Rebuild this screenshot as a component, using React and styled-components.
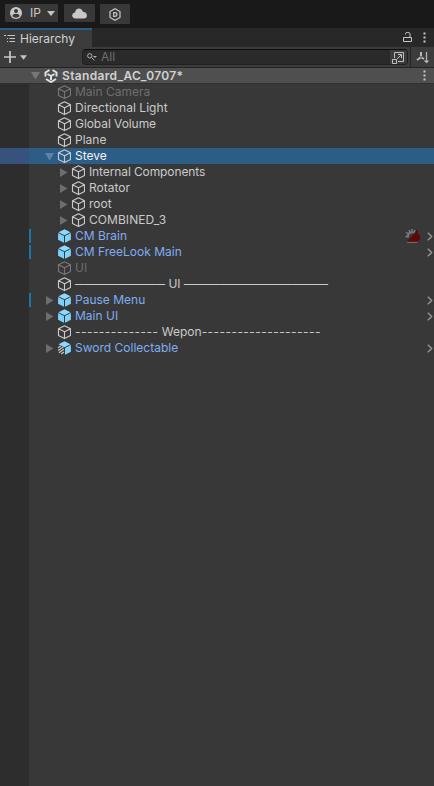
import React from 'react';
import styled, { createGlobalStyle, css } from 'styled-components';

const Global = createGlobalStyle`
  * { box-sizing: border-box; }
  body { margin: 0; background: #383838; }
`;

const Window = styled.div`
  width: 434px;
  height: 786px;
  display: flex;
  flex-direction: column;
  overflow: hidden;
  background: #383838;
  color: #c8c8c8;
  font: 12px/16px Inter, sans-serif;
  svg { display: block; flex: none; }
`;

const TopBar = styled.header`
  height: 28px;
  flex: none;
  display: flex;
  padding: 4px 5px;
  background: #191919;
`;

const TopButton = styled.div`
  width: ${(p) => p.$w}px;
  height: ${(p) => p.$h || 18}px;
  margin-right: ${(p) => p.$gap || 0}px;
  display: flex;
  align-items: center;
  justify-content: ${(p) => (p.$spread ? 'flex-start' : 'center')};
  padding-left: ${(p) => (p.$spread ? 5 : 0)}px;
  background: #383838;
  border-radius: 1px;
`;

const AccountName = styled.span`
  width: 17px;
  margin-left: 8px;
`;

const TabBar = styled.nav`
  height: 19px;
  flex: none;
  display: flex;
  justify-content: space-between;
  background: #282828;
`;

const Tab = styled.div`
  width: 92px;
  display: flex;
  align-items: center;
  gap: 5px;
  padding: 0 0 1px 4px;
  background: #3c3c3c;
  border-top: 2px solid #2c5d87;
  color: #d2d2d2;
`;

const TabLabel = styled.span`
  padding-top: 1px;
`;

const TabActions = styled.div`
  display: flex;
  align-items: center;
  gap: 11px;
  padding-right: 8px;
`;

const Toolbar = styled.div`
  height: 21px;
  flex: none;
  display: flex;
  align-items: center;
  background: #3c3c3c;
  border-bottom: 1px solid #232323;
  padding-left: 4px;
`;

const AddButton = styled.div`
  display: flex;
  align-items: center;
  gap: 4px;
  width: 78px;
`;

const SearchField = styled.div`
  width: 326px;
  height: 16px;
  display: flex;
  align-items: center;
  background: #2a2a2a;
  border: 1px solid #212121;
  border-top-color: #0d0d0d;
  border-radius: 4px;
  padding-left: 4px;
  color: #6f6f6f;
  overflow: hidden;
`;

const Placeholder = styled.span`
  flex: 1;
  margin-left: 4px;
`;

const SearchScope = styled.div`
  width: 17px;
  height: 15px;
  display: flex;
  align-items: center;
  justify-content: center;
  background: #3c3c3c;
`;

const SortButton = styled.div`
  width: 24px;
  height: 20px;
  margin-left: 2px;
  padding-left: 5px;
  border-left: 1px solid #232323;
  display: flex;
  align-items: center;
`;

const SceneHeader = styled.div`
  height: 16px;
  flex: none;
  display: flex;
  align-items: center;
  padding: 0 8px 0 31px;
  background: #4f4f4f;
  border-bottom: 1px solid #303030;
  font-weight: 600;
  color: #d2d2d2;
`;

const SceneIcon = styled.svg`
  margin-left: 4px;
`;

const SceneName = styled.span`
  flex: 1;
  margin-left: 4px;
  letter-spacing: 0.33px;
`;

const Tree = styled.main`
  flex: 1;
  background: linear-gradient(90deg, #2d2d2d 29px, #383838 29px);
`;

const TreeRow = styled.div`
  height: 16px;
  display: flex;
  align-items: center;
  padding-left: ${(p) => 42 + p.$depth * 14}px;
  padding-right: 1px;
  color: ${(p) => (p.$kind === 'off' ? '#6e6e6e' : p.$kind === 'prefab' ? '#7fadf2' : '#cacaca')};
  ${(p) => p.$override && css`background: linear-gradient(90deg, transparent 29px, #1b74ad 29px, #1b74ad 31px, transparent 31px) 0 1px / 100% 14px no-repeat;`}
  ${(p) => p.$selected && css`background: linear-gradient(90deg, #38527e 29px, #2c5d87 29px); color: #f4f4f4;`}
`;

const FoldSlot = styled.span`
  width: 15px;
  display: flex;
  justify-content: center;
`;

const RowLabel = styled.span`
  flex: 1;
  margin-left: 4px;
  white-space: pre;
  letter-spacing: ${(p) => p.$ls || 0}px;
`;

const Dashes = styled.span`
  letter-spacing: ${(p) => (p.$long ? 0 : 0.44)}px;
  ${(p) => p.$long && css`
    font-size: 9px;
    font-weight: 600;
    line-height: 0;
    vertical-align: 1px;
  `}
`;

const FoldChevron = styled.span`
  margin-left: 6px;
`;

const Fold = ({ open, color = '#6e6e6e' }) => (
  <svg width="9" height="9" viewBox="0 0 9 9" fill={color}>
    <path d={open ? 'M0 1h9L4.5 8.5z' : 'M1 0v9l7.5-4.5z'} />
  </svg>
);

const Cube = ({ kind }) => {
  const stroke = kind === 'off' ? '#777' : '#c9c9c9';
  if (kind === 'prefab' || kind === 'variant')
    return (
      <svg width="14" height="14" viewBox="-0.5 0 14 14">
        <path d="M7 .3 13 3.2 7 6.2 1 3.2z" fill="#8ad9ff" />
        <path d="M.6 4 6.5 7v6.8L.6 10.8z" fill={kind === 'variant' ? '#383838' : '#7dd3fc'} />
        <path d="M13.4 4 7.5 7v6.8l5.9-3z" fill="#7dd3fc" />
        {kind === 'variant' && (
          <path d="M.6 6.8 3.4 4.8M.6 9.6 6 5.8M1.4 11.8 6.4 8.2M3.8 13 6.4 11" stroke="#c9c9c9" strokeWidth="1.2" />
        )}
      </svg>
    );
  return (
    <svg width="14" height="14" viewBox="-0.5 0 14 14" fill="none" stroke={stroke} strokeWidth="1.15" strokeLinejoin="round">
      <path d="M7 .8 13 3.7v6.8L7 13.4 1 10.5V3.7zM1 3.7l6 3 6-3M7 6.7v6.7" />
    </svg>
  );
};

const Kebab = () => (
  <svg width="3" height="11" viewBox="0 0 3 11" fill="#c8c8c8">
    <path d="M.5.5h2v2h-2zM.5 4.5h2v2h-2zM.5 8.5h2v2h-2z" />
  </svg>
);

const Chevron = () => (
  <svg width="6" height="9" viewBox="0 0 6 9" fill="none" stroke="#969696" strokeWidth="1.4">
    <path d="M.8.7 4.7 4.5.8 8.3" />
  </svg>
);

const Caret = ({ w = 7 }) => (
  <svg width={w} height="5" viewBox="0 0 8 5" fill="#c4c4c4"><path d="M0 0h8L4 5z" /></svg>
);

const CameraBrain = () => (
  <svg width="16" height="14" viewBox="0 0 16 14">
    <path d="M1 3.5 3 4.5M.5 7.5H3M4 1l1 2M7 0v2.5M10 1 9 3" stroke="#898989" strokeWidth="1.3" />
    <path d="M3 8.500C2.500 4 5.500 2.500 9.500 3.500" fill="none" stroke="#777" strokeWidth="2" />
    <path d="M1.500 13 11 3V1.200l2 .3V5l2 1v5l-2 .5V13z" fill="#5d0909" />
    <path d="M2 13.300h10.500" stroke="#888" strokeWidth=".8" />
  </svg>
);

const nodes = [
  { name: 'Main Camera', kind: 'off' },
  { name: 'Directional Light', ls: 0.04 },
  { name: 'Global Volume', ls: -0.07 },
  { name: 'Plane' },
  { name: 'Steve', selected: true, fold: 'open' },
  { name: 'Internal Components', depth: 1, fold: 'closed', ls: -0.11 },
  { name: 'Rotator', depth: 1, fold: 'closed' },
  { name: 'root', depth: 1, fold: 'closed' },
  { name: 'COMBINED_3', depth: 1, fold: 'closed', ls: 0.06 },
  { name: 'CM Brain', kind: 'prefab', override: true, brain: true },
  { name: 'CM FreeLook Main', kind: 'prefab', override: true },
  { name: 'UI', kind: 'off' },
  { name: ' UI ', dash: '—', before: 10, after: 16 },
  { name: 'Pause Menu', kind: 'prefab', override: true, fold: 'closed' },
  { name: 'Main UI', kind: 'prefab', fold: 'closed' },
  { name: ' Wepon', dash: '-', before: 14, after: 20 },
  { name: 'Sword Collectable', kind: 'prefab', variant: true, fold: 'closed' },
];

const Node = ({ node }) => (
  <TreeRow $depth={node.depth || 0} $kind={node.kind} $selected={node.selected} $override={node.override}>
    <FoldSlot>
      {node.fold && <Fold open={node.fold === 'open'} color={node.selected ? '#6281a5' : '#6e6e6e'} />}
    </FoldSlot>
    <Cube kind={node.variant ? 'variant' : node.kind} />
    <RowLabel $ls={node.ls}>
      {node.dash && <Dashes $long={node.dash === '—'}>{node.dash.repeat(node.before)}</Dashes>}
      {node.name}
      {node.dash && <Dashes $long={node.dash === '—'}>{node.dash.repeat(node.after)}</Dashes>}
    </RowLabel>
    {node.brain && <CameraBrain />}
    {node.kind === 'prefab' && <FoldChevron><Chevron /></FoldChevron>}
  </TreeRow>
);

export default function App() {
  return (
    <Window>
      <Global />
      <TopBar>
        <TopButton $w={53} $gap={6} $spread>
          <svg width="12" height="12" viewBox="0 0 12 12">
            <circle cx="6" cy="6" r="6" fill="#c8c8c8" />
            <circle cx="6" cy="4" r="2" fill="#383838" />
            <path d="M2.3 9c.7-3 6.700-3 7.400 0-1.800 2.200-5.600 2.200-7.400 0z" fill="#383838" />
          </svg>
          <AccountName>IP</AccountName>
          <Caret w={8} />
        </TopButton>
        <TopButton $w={31} $gap={5}>
          <svg width="15" height="11" viewBox="0 0 15 11" fill="#c8c8c8">
            <path d="M3.500 10.500C-.8 10.500-.8 5 3 4.500 3.500-.6 9.800-1 11 4c5-.3 5 6.500 1 6.500z" />
          </svg>
        </TopButton>
        <TopButton $w={30} $h={20}>
          <svg width="12" height="13" viewBox="0 0 12 13" fill="none" stroke="#c8c8c8" strokeWidth="1.2">
            <path d="M6 .8 11 3.600v5.800L6 12.200 1 9.400V3.600z" /><path d="M4.700 4.700h1.200q2 0 2 1.800t-2 1.800H4.700z" />
          </svg>
        </TopButton>
      </TopBar>
      <TabBar>
        <Tab>
          <svg width="11" height="9" viewBox="0 0 11 9" stroke="#c8c8c8">
            <path d="M0 1.500h2M3.500 1.500H11M3 4.500h1M5.500 4.500H11M3 7.500h1M5.500 7.500H11" />
          </svg>
          <TabLabel>Hierarchy</TabLabel>
        </Tab>
        <TabActions>
          <svg width="9" height="11" viewBox="0 0 9 11" fill="none" stroke="#c8c8c8">
            <path d="M.5 5.500h8v4h-8zM2.500 2.500V1.500q0-1 2-1t2.500 1v4" />
          </svg>
          <Kebab />
        </TabActions>
      </TabBar>
      <Toolbar>
        <AddButton>
          <svg width="12" height="12" viewBox="0 0 12 12" stroke="#c8c8c8" strokeWidth="1.700"><path d="M6 0v12M0 6h12" /></svg>
          <Caret />
        </AddButton>
        <SearchField>
          <svg width="10" height="8" viewBox="0 0 10 8" fill="none" stroke="#b0b0b0">
            <circle cx="2.800" cy="2.800" r="2.200" /><path d="m4.400 4.400 3 3" /><path d="M6 3h4L8 5z" fill="#b0b0b0" stroke="none" />
          </svg>
          <Placeholder>All</Placeholder>
          <SearchScope>
            <svg width="13" height="13" viewBox="0 0 13 13" fill="none" stroke="#c0c0c0">
              <path d="M2.500 7V1.500h9v9H6M.5 8.500h4v4h-4zM5 8l4-4M6 3.500h3.500V7" />
            </svg>
          </SearchScope>
        </SearchField>
        <SortButton>
          <svg width="14" height="13" viewBox="0 0 14 13" fill="none" stroke="#b8b8b8">
            <path d="M5 1v4.500M4.500 6.500 1 9M5.500 6.500 8 8" strokeWidth="2" />
            <path d="M10.500 1v10.500M8.500 9.500l2 2 2-2" strokeWidth="1.200" />
          </svg>
        </SortButton>
      </Toolbar>
      <SceneHeader>
        <Fold open color="#777" />
        <SceneIcon width="14" height="14" viewBox="0 0 14 14" fill="none" stroke="#dce4e6" strokeWidth="2">
          <path d="M5.500 1 1.500 3.500v4M8.500 1l4 2.500v4M2 10l5 3 5-3M7 7v4M7 7 3.500 5M7 7l3.500-2" />
        </SceneIcon>
        <SceneName>Standard_AC_0707*</SceneName>
        <Kebab />
      </SceneHeader>
      <Tree>
        {nodes.map((node, i) => <Node key={i} node={node} />)}
      </Tree>
    </Window>
  );
}
